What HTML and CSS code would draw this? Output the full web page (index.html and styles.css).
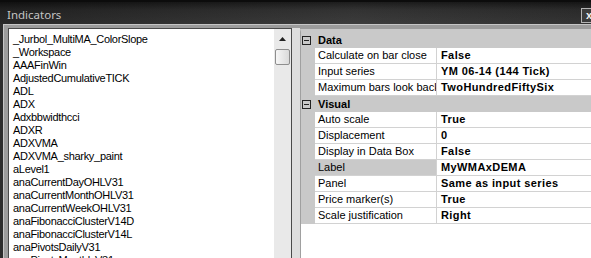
FILE: index.html
```html
<!DOCTYPE html>
<html lang="en">
<head>
    <meta charset="UTF-8">
    <title>Indicators</title>
    <link rel="stylesheet" href="styles.css">
</head>
<body>
    <div class="window">
        <div class="titlebar">
            <span class="title">Indicators</span>
            <span class="close">x</span>
        </div>
        <div class="client">
            <div class="list">
                <div class="items">
                    <div>_Jurbol_MultiMA_ColorSlope</div>
                    <div>_Workspace</div>
                    <div>AAAFinWin</div>
                    <div>AdjustedCumulativeTICK</div>
                    <div>ADL</div>
                    <div>ADX</div>
                    <div>Adxbbwidthcci</div>
                    <div>ADXR</div>
                    <div>ADXVMA</div>
                    <div>ADXVMA_sharky_paint</div>
                    <div>aLevel1</div>
                    <div>anaCurrentDayOHLV31</div>
                    <div>anaCurrentMonthOHLV31</div>
                    <div>anaCurrentWeekOHLV31</div>
                    <div>anaFibonacciClusterV14D</div>
                    <div>anaFibonacciClusterV14L</div>
                    <div>anaPivotsDailyV31</div>
                    <div>anaPivotsMonthlyV31</div>
                </div>
                <div class="vscroll">
                    <div class="scroll-btn">
                        <svg width="7" height="4" viewBox="0 0 7 4"><polygon points="0,4 3.5,0 7,4" fill="#222"/></svg>
                    </div>
                    <div class="thumb"></div>
                </div>
            </div>
            <div class="splitter"></div>
            <div class="grid">
                <div class="category"><span class="toggle"></span><span class="cat-name">Data</span></div>
                <div class="prop"><span class="margin"></span><span class="name">Calculate on bar close</span><span class="value">False</span></div>
                <div class="prop"><span class="margin"></span><span class="name">Input series</span><span class="value">YM 06-14 (144 Tick)</span></div>
                <div class="prop"><span class="margin"></span><span class="name">Maximum bars look back</span><span class="value">TwoHundredFiftySix</span></div>
                <div class="category"><span class="toggle"></span><span class="cat-name">Visual</span></div>
                <div class="prop"><span class="margin"></span><span class="name">Auto scale</span><span class="value">True</span></div>
                <div class="prop"><span class="margin"></span><span class="name">Displacement</span><span class="value">0</span></div>
                <div class="prop"><span class="margin"></span><span class="name">Display in Data Box</span><span class="value">False</span></div>
                <div class="prop selected"><span class="margin"></span><span class="name">Label</span><span class="value">MyWMAxDEMA</span></div>
                <div class="prop"><span class="margin"></span><span class="name">Panel</span><span class="value">Same as input series</span></div>
                <div class="prop"><span class="margin"></span><span class="name">Price marker(s)</span><span class="value">True</span></div>
                <div class="prop"><span class="margin"></span><span class="name">Scale justification</span><span class="value">Right</span></div>
            </div>
        </div>
    </div>
</body>
</html>
```

FILE: styles.css
```css
body {
    margin: 0;
    width: 591px;
    height: 258px;
    overflow: hidden;
    font-family: "Liberation Sans", Arial, sans-serif;
    font-size: 11px;
    color: #000;
}
.window {
    height: 258px;
    display: flex;
    flex-direction: column;
    background: #2c2c2c;
}
.titlebar {
    height: 24px;
    flex: none;
    display: flex;
    align-items: flex-start;
    box-sizing: border-box;
    border-top: 2px solid #0c0c0c;
    padding-left: 7px;
    background: linear-gradient(90deg, rgba(0, 0, 0, 0.25), rgba(255, 255, 255, 0.03) 60%, rgba(0, 0, 0, 0.05)),
                linear-gradient(#161616, #2c2c2c 35%, #363636);
}
.title {
    font-family: "Noto Sans", sans-serif;
    font-size: 11.5px;
    line-height: 16px;
    padding-top: 5px;
    color: #c4c4c4;
}
.close {
    margin-left: auto;
    margin-right: -8px;
    margin-top: 6px;
    width: 18px;
    height: 15px;
    box-sizing: border-box;
    border: 1px solid #b4b4b4;
    background: #3c3c3c;
    color: #f0f0f0;
    font-weight: bold;
    font-size: 11px;
    line-height: 12px;
    padding-left: 4px;
}
.client {
    flex: 1;
    min-height: 0;
    display: flex;
    margin-left: 3px;
    border-top: 1px solid #c6c6c6;
    border-left: 1px solid #c6c6c6;
    background: #9c9c9c;
    padding: 3px 0 0 4px;
}
.list {
    width: 284px;
    flex: none;
    box-sizing: border-box;
    border: 1px solid #4a4a4a;
    border-bottom: none;
    background: #fff;
    display: flex;
    overflow: hidden;
}
.items {
    flex: 1;
    padding: 4px 0 0 4px;
    line-height: 13px;
    letter-spacing: -0.3px;
    white-space: nowrap;
    overflow: hidden;
}
.vscroll {
    width: 17px;
    flex: none;
    background: #e9e9e9;
    display: flex;
    flex-direction: column;
    align-items: center;
}
.scroll-btn {
    height: 19px;
    display: flex;
    align-items: center;
    justify-content: center;
    padding-top: 1px;
    box-sizing: border-box;
}
.thumb {
    margin-top: 1px;
    width: 15px;
    height: 16px;
    box-sizing: border-box;
    border: 1px solid #8e8e8e;
    border-radius: 2px;
    background: linear-gradient(90deg, #f6f6f6, #dadada);
}
.splitter {
    width: 8px;
    flex: none;
    background: #dedede;
}
.grid {
    flex: 1;
    margin-top: 1px;
    background: #fff;
    border-left: 1px solid #a0a0a0;
    border-top: 3px solid #c9c9c9;
    overflow: hidden;
}
.category {
    height: 16px;
    display: flex;
    align-items: center;
    background: #c9c9c9;
    font-weight: bold;
}
.toggle {
    width: 9px;
    height: 9px;
    margin-left: 1px;
    margin-right: 4px;
    box-sizing: border-box;
    border: 1px solid #222;
    background: linear-gradient(#222, #222) center / 5px 1px no-repeat;
}
.cat-name {
    padding-left: 3px;
}
.prop {
    display: grid;
    grid-template-columns: 14px 122px 1fr;
    height: 16px;
    line-height: 15px;
    white-space: nowrap;
}
.margin {
    background: #c9c9c9;
}
.name {
    overflow: hidden;
    padding-left: 3px;
    border-right: 1px solid #d2d2d2;
    border-bottom: 1px solid #d2d2d2;
}
.value {
    overflow: hidden;
    padding-left: 4px;
    font-weight: bold;
    letter-spacing: 0.4px;
    border-bottom: 1px solid #d2d2d2;
}
.selected .name {
    background: #c9c9c9;
}
```
